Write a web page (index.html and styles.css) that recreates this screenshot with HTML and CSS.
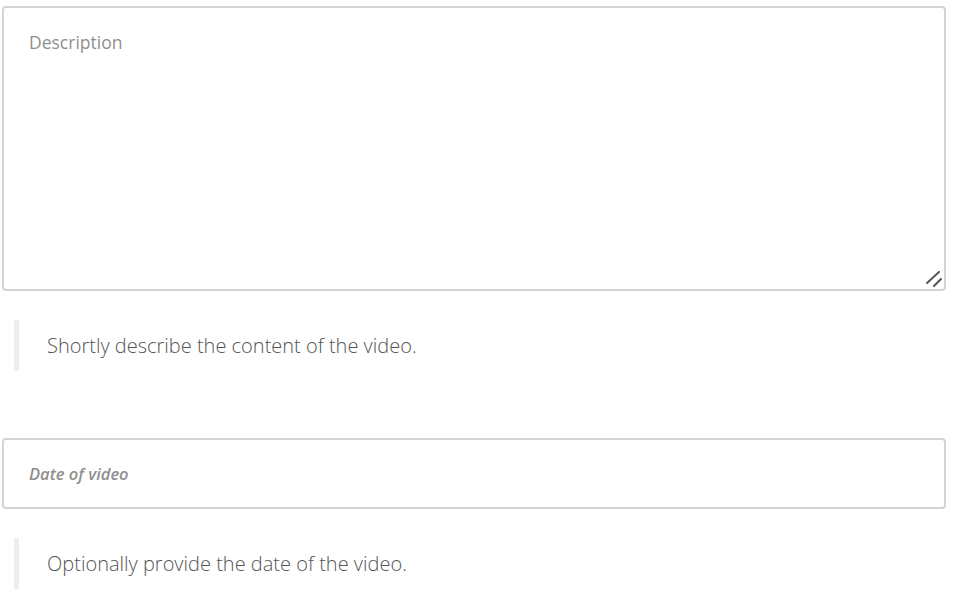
FILE: index.html
```html
<!DOCTYPE html>
<html lang="en">
<head>
  <meta charset="UTF-8">
  <title>Video details</title>
  <link rel="stylesheet" href="styles.css">
</head>
<body>
  <form class="video-form">
    <div class="field">
      <div class="textarea-wrap">
        <textarea class="control description" placeholder="Description"></textarea>
        <!-- resize grip -->
        <svg class="grip" width="16" height="16" viewBox="0 0 16 16">
          <path d="M1 12 L13 1 M8 15 L15 8" stroke="#555" stroke-width="2" stroke-linecap="round" fill="none"/>
        </svg>
      </div>
      <blockquote class="hint">Shortly describe the content of the video.</blockquote>
    </div>
    <div class="field">
      <input type="text" class="control date" placeholder="Date of video">
      <blockquote class="hint">Optionally provide the date of the video.</blockquote>
    </div>
  </form>
</body>
</html>
```
FILE: styles.css
```css
body {
  margin: 0;
  padding: 6px 14px 0 2px;
  background: #fff;
  font-family: 'Open Sans', sans-serif;
  color: #555;
}
.video-form {
  display: flex;
  flex-direction: column;
  gap: 67px;
}
.field {
  display: flex;
  flex-direction: column;
  gap: 29px;
}
.textarea-wrap {
  position: relative;
  width: 944px;
  height: 285px;
}
.control {
  box-sizing: border-box;
  width: 944px;
  margin: 0;
  border: 2px solid #d4d4d4;
  border-radius: 4px;
  background: #fff;
  font-family: 'Open Sans', sans-serif;
  font-size: 17.5px;
  color: #333;
  outline: none;
}
.control::placeholder {
  color: #8f8f8f;
  font-weight: 400;
  opacity: 1;
}
.description {
  display: block;
  height: 285px;
  padding: 22px 25px;
  resize: none;
}
.grip {
  position: absolute;
  right: 4px;
  bottom: 4px;
}
.date {
  height: 71px;
  padding: 0 25px;
  font-size: 16.5px;
}
.date::placeholder {
  font-style: italic;
  font-weight: 600;
}
.hint {
  margin: 0 0 0 12px;
  padding: 12px 0 12px 28px;
  border-left: 5px solid #eee;
  font-size: 20px;
  font-weight: 300;
  line-height: 27px;
  color: #555;
}
```
